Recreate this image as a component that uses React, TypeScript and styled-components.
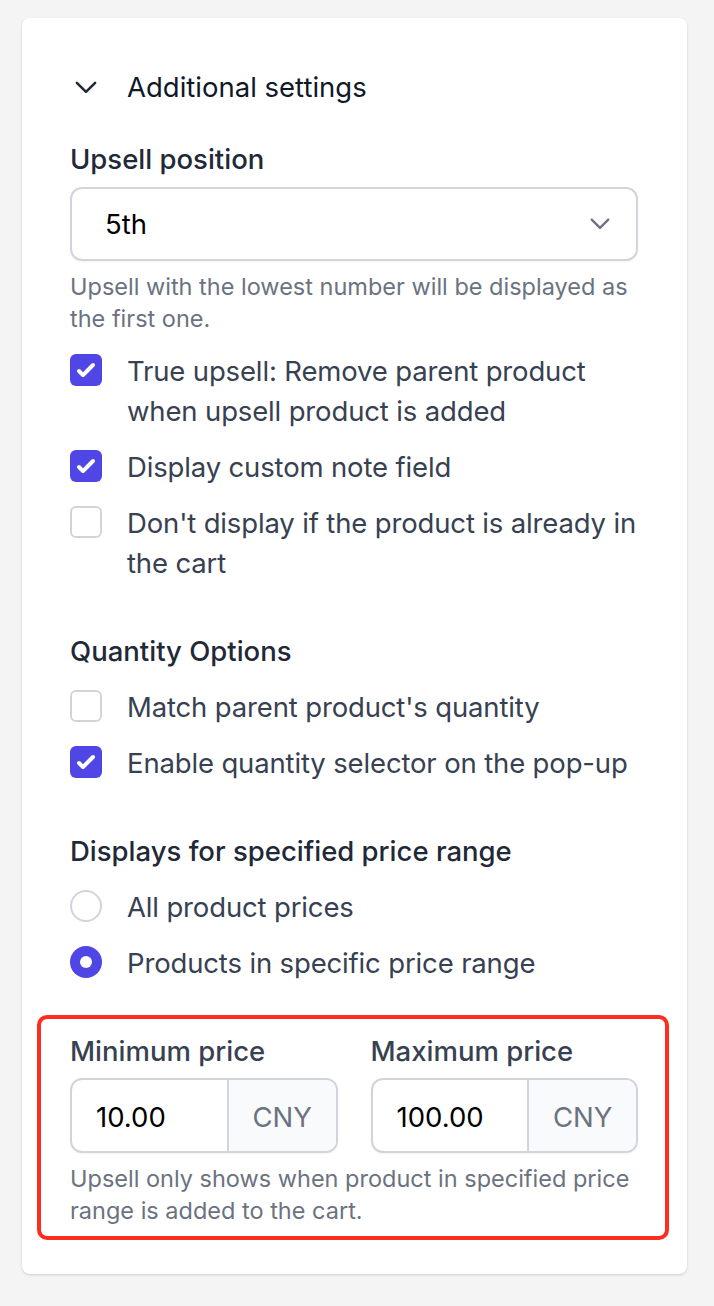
import React from 'react';
import styled, { createGlobalStyle } from 'styled-components';

const GlobalStyle = createGlobalStyle`
    body {
        margin: 0;
        background: #f4f4f5;
        font-family: Inter, "Noto Sans", "Liberation Sans", sans-serif;
        -webkit-font-smoothing: antialiased;
    }
`;

const Card = styled.div`
    width: 665px;
    box-sizing: border-box;
    margin: 18px 0 32px 22px;
    padding: 49px 49px 34px 48px;
    background: #ffffff;
    border-radius: 8px;
    box-shadow: 0 1px 3px rgba(0, 0, 0, 0.12), 0 1px 2px rgba(0, 0, 0, 0.04);
    display: flex;
    flex-direction: column;
`;

const Header = styled.div`
    display: flex;
    align-items: center;
    gap: 25px;
    height: 40px;
    font-size: 27.5px;
    color: #111827;
`;

const IconBox = styled.span`
    width: 32px;
    height: 32px;
    display: flex;
    align-items: center;
    justify-content: center;
    flex-shrink: 0;
`;

const Label = styled.div<{ $top?: number }>`
    margin-top: ${p => p.$top ?? 32}px;
    font-size: 27.5px;
    line-height: 40px;
    font-weight: 500;
    color: #1f2937;
`;

const Select = styled.div`
    margin-top: 8px;
    height: 74px;
    box-sizing: border-box;
    border: 2px solid #d1d5db;
    border-radius: 12px;
    display: flex;
    align-items: center;
    justify-content: space-between;
    padding: 0 26px 0 33px;
    font-size: 27.5px;
    color: #000000;
    box-shadow: 0 1px 2px rgba(0, 0, 0, 0.05);
`;

const Help = styled.p<{ $top?: number }>`
    margin: ${p => p.$top ?? 10}px 0 0;
    font-size: 23.5px;
    line-height: 32px;
    color: #6b7280;
`;

const OptionList = styled.div<{ $top?: number }>`
    margin-top: ${p => p.$top ?? 16}px;
    display: flex;
    flex-direction: column;
    gap: 16px;
`;

const Option = styled.label`
    display: flex;
    align-items: flex-start;
    gap: 25px;
    font-size: 27.5px;
    line-height: 40px;
    letter-spacing: -0.15px;
    color: #374151;
`;

const Box = styled.span<{ $checked: boolean; $round?: boolean }>`
    width: 32px;
    height: 32px;
    margin-top: 3px;
    flex-shrink: 0;
    box-sizing: border-box;
    border-radius: ${p => (p.$round ? '50%' : '6px')};
    border: ${p => (p.$checked ? 'none' : '2px solid #d1d5db')};
    background: ${p => (p.$checked ? '#4f46e5' : '#ffffff')};
    display: flex;
    align-items: center;
    justify-content: center;
`;

const Dot = styled.span`
    width: 12px;
    height: 12px;
    border-radius: 50%;
    background: #ffffff;
`;

const Highlight = styled.div`
    margin: 32px -31px 0 -33px;
    padding: 12px 27px 9px 29px;
    border: 4px solid #ff2d20;
    border-radius: 10px;
`;

const PriceGrid = styled.div`
    display: grid;
    grid-template-columns: minmax(0, 1fr) minmax(0, 1fr);
    column-gap: 33px;
`;

const PriceLabel = styled.div`
    font-size: 27.5px;
    line-height: 40px;
    font-weight: 500;
    color: #374151;
`;

const InputGroup = styled.div`
    margin-top: 7px;
    height: 75px;
    box-sizing: border-box;
    border: 2px solid #d1d5db;
    border-radius: 12px;
    display: flex;
    overflow: hidden;
    box-shadow: 0 1px 2px rgba(0, 0, 0, 0.05);
`;

const Input = styled.input`
    flex: 1;
    width: 0;
    min-width: 0;
    border: none;
    outline: none;
    padding: 2px 0 0 24px;
    font-family: inherit;
    font-size: 27.5px;
    color: #000000;
    background: transparent;
`;

const Addon = styled.span`
    width: 109px;
    flex-shrink: 0;
    box-sizing: border-box;
    border-left: 2px solid #d1d5db;
    background: #f9fafb;
    display: flex;
    align-items: center;
    padding: 2px 0 0 24px;
    font-size: 27.5px;
    color: #6b7280;
`;

const Check = () => (
    <svg width="32" height="32" viewBox="0 0 16 16" fill="#ffffff">
        <path d="M12.207 4.793a1 1 0 010 1.414l-5 5a1 1 0 01-1.414 0l-2-2a1 1 0 011.414-1.414L6.5 9.086l4.293-4.293a1 1 0 011.414 0z" />
    </svg>
);

const Chevron = ({ color, width }: { color: string; width: number }) => (
    <svg width={width} height={width * 0.58} viewBox="0 0 24 14" fill="none">
        <polyline points="2,2 12,12 22,2" stroke={color} strokeWidth="2.8" strokeLinecap="round" strokeLinejoin="round" />
    </svg>
);

type Item = { text: string; checked: boolean };

const Checkbox = ({ text, checked }: Item) => (
    <Option>
        <Box $checked={checked}>{checked && <Check />}</Box>
        <span>{text}</span>
    </Option>
);

const Radio = ({ text, checked }: Item) => (
    <Option>
        <Box $checked={checked} $round>{checked && <Dot />}</Box>
        <span>{text}</span>
    </Option>
);

const PriceField = ({ label, value }: { label: string; value: string }) => (
    <div>
        <PriceLabel>{label}</PriceLabel>
        <InputGroup>
            <Input readOnly value={value} />
            <Addon>CNY</Addon>
        </InputGroup>
    </div>
);

export default function App() {
    return (
        <>
            <GlobalStyle />
            <Card>
                <Header>
                    <IconBox>
                        <Chevron color="#1f2937" width={22} />
                    </IconBox>
                    Additional settings
                </Header>

                <Label>Upsell position</Label>
                <Select>
                    <span>5th</span>
                    <Chevron color="#6b7280" width={20} />
                </Select>
                <Help>Upsell with the lowest number will be displayed as the first one.</Help>

                <OptionList>
                    <Checkbox checked text="True upsell: Remove parent product when upsell product is added" />
                    <Checkbox checked text="Display custom note field" />
                    <Checkbox checked={false} text="Don't display if the product is already in the cart" />
                </OptionList>

                <Label $top={48}>Quantity Options</Label>
                <OptionList>
                    <Checkbox checked={false} text="Match parent product's quantity" />
                    <Checkbox checked text="Enable quantity selector on the pop-up" />
                </OptionList>

                <Label $top={48}>Displays for specified price range</Label>
                <OptionList>
                    <Radio checked={false} text="All product prices" />
                    <Radio checked text="Products in specific price range" />
                </OptionList>

                <Highlight>
                    <PriceGrid>
                        <PriceField label="Minimum price" value="10.00" />
                        <PriceField label="Maximum price" value="100.00" />
                    </PriceGrid>
                    <Help>Upsell only shows when product in specified price range is added to the cart.</Help>
                </Highlight>
            </Card>
        </>
    );
}
